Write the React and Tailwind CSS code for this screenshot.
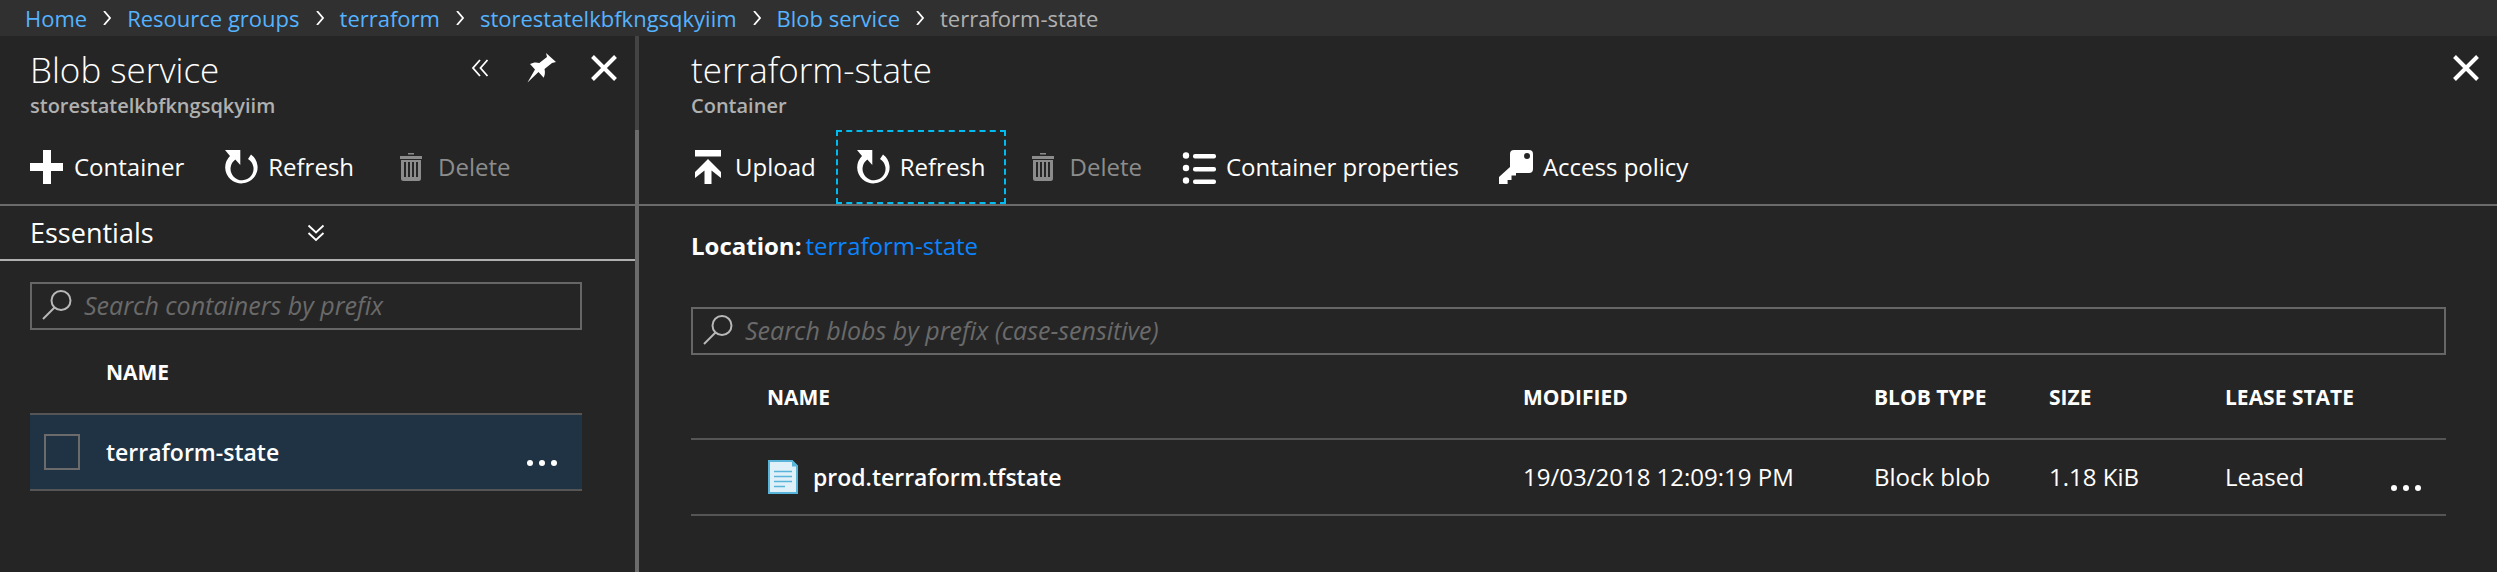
const crumbs = ["Home", "Resource groups", "terraform", "storestatelkbfkngsqkyiim", "Blob service"];

function PlusIcon() {
  return (
    <svg width="34" height="34" viewBox="0 0 34 34" fill="currentColor" aria-hidden="true">
      <path d="M13 0h8v13h12v8H21v13h-8V21H0v-8h13z" />
    </svg>
  );
}

function RefreshIcon() {
  return (
    <svg width="34" height="34" viewBox="0 0 34 34" fill="currentColor" aria-hidden="true">
      <path d="M1 0h15.300v15l-5-5.500A11.500 11.500 0 1 0 24 9l3-4.500A16.200 16 0 1 1 6 6z" />
    </svg>
  );
}

function TrashIcon() {
  return (
    <svg width="34" height="34" viewBox="0 0 34 34" fill="currentColor" aria-hidden="true">
      <path d="M14 3h6v1.500h-6zM6 6h22v3H6z" />
      <path fillRule="evenodd" d="M7 10h20v18.500a2.500 2.500 0 0 1-2.500 2.500h-15A2.500 2.500 0 0 1 7 28.500zM10 12v15h2V12zM14 12v15h2V12zM18 12v15h2V12zM22 12v15h2V12z" />
    </svg>
  );
}

function UploadIcon() {
  return (
    <svg width="34" height="34" viewBox="0 0 34 34" fill="currentColor" aria-hidden="true">
      <path d="M4 0h26v6.500H4zM17 9l13 13v6l-9.500-7.500V34h-7V20.500L4 28v-6z" />
    </svg>
  );
}

function ListIcon() {
  return (
    <svg width="34" height="34" viewBox="0 0 34 34" fill="currentColor" aria-hidden="true">
      <circle cx="4" cy="5.500" r="3.200" />
      <circle cx="4" cy="18" r="3.200" />
      <circle cx="4" cy="30.500" r="3.200" />
      <rect x="11" y="4" width="23" height="4.500" rx="2" />
      <rect x="11" y="17" width="23" height="4.500" rx="2" />
      <rect x="11" y="29.500" width="23" height="4.500" rx="2" />
    </svg>
  );
}

function KeyIcon() {
  return (
    <svg width="34" height="34" viewBox="0 0 34 34" fill="currentColor" aria-hidden="true">
      <path
        fillRule="evenodd"
        d="M15 0h15a4 4 0 0 1 4 4v15a4 4 0 0 1-4 4H17v2.500h-4.500V30H8.600v4H0v-7l11-10V4a4 4 0 0 1 4-4zM28 3a3 3 0 1 0 0 6a3 3 0 0 0 0-6z"
      />
    </svg>
  );
}

function CollapseIcon() {
  return (
    <svg width="18" height="18" viewBox="0 0 18 18" fill="none" stroke="currentColor" strokeWidth="1.800" aria-hidden="true">
      <path d="M9 1L2 9l7 8M16.500 1l-7 8 7 8" />
    </svg>
  );
}

function ExpandIcon() {
  return (
    <svg width="18" height="18" viewBox="0 0 18 18" fill="none" stroke="currentColor" strokeWidth="1.800" aria-hidden="true">
      <path d="M1.500 1.500L9 8.500l7.500-7M1.500 9L9 16l7.500-7" />
    </svg>
  );
}

function PinIcon() {
  return (
    <svg width="30" height="30" viewBox="0 0 30 30" fill="currentColor" aria-hidden="true">
      <path d="M19 0l10 9-4 1-7.500 6c.8 3 .5 6-.8 8.700L11.500 19 .5 29.500 8 16.500 3 11c3-1.500 6-2 9.300-1L20 4z" />
    </svg>
  );
}

function CloseIcon() {
  return (
    <svg width="26" height="26" viewBox="0 0 26 26" fill="none" stroke="currentColor" strokeWidth="4" aria-hidden="true">
      <path d="M1.500 1.500l23 23M24.500 1.500l-23 23" />
    </svg>
  );
}

function SearchIcon() {
  return (
    <svg width="30" height="30" viewBox="0 0 30 30" fill="none" stroke="#b8b8b8" strokeWidth="2" aria-hidden="true">
      <circle cx="19" cy="10.500" r="9.500" />
      <path d="M12.500 17.500L1 29" />
    </svg>
  );
}

function FileIcon() {
  return (
    <svg width="30" height="34" viewBox="0 0 30 34" aria-hidden="true">
      <path d="M1 1h23l5 5v27H1z" fill="#dff0f8" stroke="#59b4d9" strokeWidth="2" />
      <path d="M24 0l6 6.500h-6z" fill="#59b4d9" />
      <path d="M6 11.500h18M6 16.500h18M6 21.500h18M6 26.500h11" stroke="#59b4d9" strokeWidth="1.500" />
    </svg>
  );
}

function Dots() {
  return (
    <svg width="30" height="28" viewBox="0 0 30 28" fill="#fff" aria-hidden="true">
      <circle cx="3" cy="25" r="3" />
      <circle cx="15" cy="25" r="3" />
      <circle cx="27" cy="25" r="3" />
    </svg>
  );
}

function Breadcrumb() {
  return (
    <nav aria-label="Breadcrumb" className="h-9 shrink-0 bg-[#303030] px-[25px]">
      <ol className="flex h-full items-center text-[22px] leading-9">
        {crumbs.map((c) => (
          <li key={c} className="flex items-center">
            <a href="#" className="text-[#55b3ff]">{c}</a>
            <svg width="8" height="14" viewBox="0 0 8 14" fill="none" stroke="#fff" strokeWidth="1.800" className="mx-4" aria-hidden="true">
              <path d="M1 0l6 7-6 7" />
            </svg>
          </li>
        ))}
        <li aria-current="page" className="text-[#b0b0b0]">terraform-state</li>
      </ol>
    </nav>
  );
}

function PanelHeader({ title, subtitle, pad, children }) {
  return (
    <header className={`flex h-[94px] shrink-0 items-start justify-between pt-2 ${pad}`}>
      <div>
        <h2 className="pt-0.5 text-[35px] leading-[48px] font-light">{title}</h2>
        <p className="text-[20px] leading-6 font-semibold text-[#b0b0b0]">{subtitle}</p>
      </div>
      <div className="flex">{children}</div>
    </header>
  );
}

function HeaderButton({ label, children }) {
  return (
    <button type="button" aria-label={label} className="flex h-12 w-[62px] items-center justify-center">
      {children}
    </button>
  );
}

function Tool({ icon, label, disabled, focused }) {
  return (
    <button
      type="button"
      disabled={disabled}
      className={`flex h-full items-center gap-[10px] border-2 border-dashed px-[18px] text-[24px] leading-8 ${
        focused ? "border-[#00bcf2]" : "border-transparent"
      } ${disabled ? "text-[#8c8c8c]" : "text-white"}`}
    >
      {icon}
      {label}
    </button>
  );
}

function SearchBox({ id, label }) {
  return (
    <div className="flex h-12 items-center gap-3 border-2 border-[#666] pb-0.5 pl-[10px]">
      <label htmlFor={id} aria-label={label}>
        <SearchIcon />
      </label>
      <input
        id={id}
        type="text"
        placeholder={label}
        className="min-w-0 flex-1 bg-transparent text-[25px] leading-8 outline-none placeholder:text-[#6a6a6a] placeholder:italic"
      />
    </div>
  );
}

const th = "h-[83px] p-0 text-left text-[21px] leading-7 font-bold";
const td = "h-[78px] border-y-2 border-[#555] p-0";
const nameText = "text-[23px] leading-8 font-semibold";
const cellText = "text-[24px] leading-8";

export default function App() {
  return (
    <div className="flex min-h-screen flex-col bg-[#252525] font-['Open_Sans',sans-serif] text-white">
      <Breadcrumb />
      <main className="flex flex-1">
        <section className="flex w-[635px] shrink-0 flex-col">
          <PanelHeader title="Blob service" subtitle="storestatelkbfkngsqkyiim" pad="pl-[30px]">
            <HeaderButton label="Collapse"><CollapseIcon /></HeaderButton>
            <HeaderButton label="Pin"><PinIcon /></HeaderButton>
            <HeaderButton label="Close"><CloseIcon /></HeaderButton>
          </PanelHeader>
          <div className="flex h-[76px] border-b-2 border-[#6b6b6b] pl-[10px]">
            <Tool icon={<PlusIcon />} label="Container" />
            <Tool icon={<RefreshIcon />} label="Refresh" />
            <Tool icon={<TrashIcon />} label="Delete" disabled />
          </div>
          <button
            type="button"
            className="grid h-[55px] grid-cols-[1fr_auto_1fr] items-center border-b-2 border-[#b0b0b0] pr-[34px] pl-[30px] text-left text-[27px] leading-10"
          >
            Essentials
            <ExpandIcon />
          </button>
          <div className="pt-[21px] pr-[53px] pl-[30px]">
            <SearchBox id="search-containers" label="Search containers by prefix" />
            <table className="w-full table-fixed border-separate border-spacing-0">
              <thead>
                <tr>
                  <td className="w-[76px]" />
                  <th scope="col" className={th}>NAME</th>
                  <td className="w-[55px]" />
                </tr>
              </thead>
              <tbody>
                <tr className="bg-[#1f3344]">
                  <td className={`${td} pl-[14px]`}>
                    <input
                      type="checkbox"
                      aria-label="Select terraform-state"
                      className="block size-9 appearance-none border-2 border-[#6b6b6b]"
                    />
                  </td>
                  <td className={`${td} ${nameText}`}>terraform-state</td>
                  <td className={td}>
                    <button type="button" aria-label="More actions" className="block"><Dots /></button>
                  </td>
                </tr>
              </tbody>
            </table>
          </div>
        </section>
        <div className="flex w-1 shrink-0 flex-col">
          <div className="h-[94px] bg-[#444]" />
          <div className="flex-1 bg-[#6b6b6b]" />
        </div>
        <section className="flex min-w-0 flex-1 flex-col">
          <PanelHeader title="terraform-state" subtitle="Container" pad="pl-[52px]">
            <HeaderButton label="Close"><CloseIcon /></HeaderButton>
          </PanelHeader>
          <div className="flex h-[76px] border-b-2 border-[#6b6b6b] pl-8">
            <Tool icon={<UploadIcon />} label="Upload" />
            <Tool icon={<RefreshIcon />} label="Refresh" focused />
            <Tool icon={<TrashIcon />} label="Delete" disabled />
            <Tool icon={<ListIcon />} label="Container properties" />
            <Tool icon={<KeyIcon />} label="Access policy" />
          </div>
          <div className="pt-6 pr-[51px] pl-[52px]">
            <p className="mb-[45px] flex gap-1 text-[24px] leading-8">
              <span className="font-bold">Location:</span>
              <a href="#" className="text-[#0a84ff]">terraform-state</a>
            </p>
            <SearchBox id="search-blobs" label="Search blobs by prefix (case-sensitive)" />
            <table className="w-full table-fixed border-separate border-spacing-0">
              <thead>
                <tr>
                  <th scope="col" className={`${th} pl-[76px]`}>NAME</th>
                  <th scope="col" className={`${th} w-[351px]`}>MODIFIED</th>
                  <th scope="col" className={`${th} w-[175px]`}>BLOB TYPE</th>
                  <th scope="col" className={`${th} w-[176px]`}>SIZE</th>
                  <th scope="col" className={`${th} w-[166px]`}>LEASE STATE</th>
                  <td className="w-[55px]" />
                </tr>
              </thead>
              <tbody>
                <tr>
                  <td className={`${td} ${nameText} pl-[77px]`}>
                    <div className="flex items-center gap-[15px]">
                      <FileIcon />
                      prod.terraform.tfstate
                    </div>
                  </td>
                  <td className={`${td} ${cellText}`}>19/03/2018 12:09:19 PM</td>
                  <td className={`${td} ${cellText}`}>Block blob</td>
                  <td className={`${td} ${cellText}`}>1.18 KiB</td>
                  <td className={`${td} ${cellText}`}>Leased</td>
                  <td className={td}>
                    <button type="button" aria-label="More actions" className="block"><Dots /></button>
                  </td>
                </tr>
              </tbody>
            </table>
          </div>
        </section>
      </main>
    </div>
  );
}
